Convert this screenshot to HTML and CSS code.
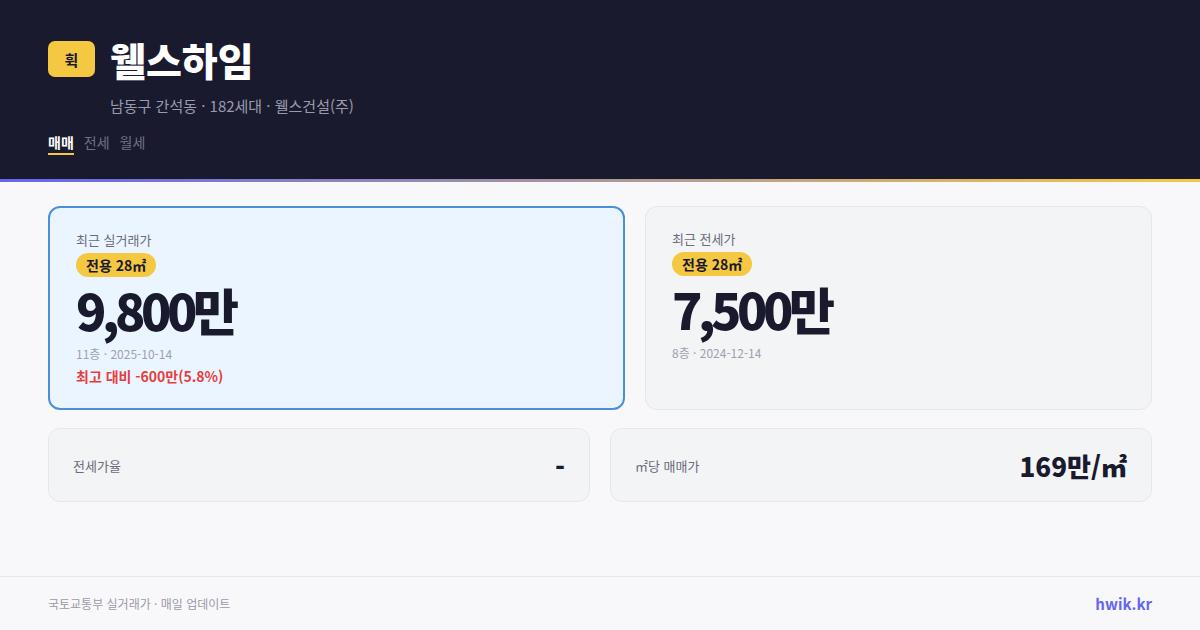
FILE: index.html
```html
<!DOCTYPE html>
<html lang="ko">
<head>
<meta charset="utf-8">
<link rel="stylesheet" href="styles.css">
</head>
<body>
<header class="hero">
  <div class="title-row">
    <div class="logo">휙</div>
    <h1 class="title">웰스하임</h1>
  </div>
  <div class="subtitle">남동구 간석동 · 182세대 · 웰스건설(주)</div>
  <nav class="tabs">
    <span class="tab active">매매</span>
    <span class="tab">전세</span>
    <span class="tab">월세</span>
  </nav>
</header>
<div class="accent"></div>
<main class="content">
  <div class="top-row">
    <section class="card card-main">
      <div class="card-label">최근 실거래가</div>
      <span class="badge">전용 28㎡</span>
      <div class="price">9,800만</div>
      <div class="meta">11층 · 2025-10-14</div>
      <div class="diff">최고 대비 -600만(5.8%)</div>
    </section>
    <section class="card card-side">
      <div class="card-label">최근 전세가</div>
      <span class="badge">전용 28㎡</span>
      <div class="price">7,500만</div>
      <div class="meta">8층 · 2024-12-14</div>
    </section>
  </div>
  <div class="bottom-row">
    <section class="stat">
      <span class="stat-label">전세가율</span>
      <span class="stat-value">-</span>
    </section>
    <section class="stat">
      <span class="stat-label">㎡당 매매가</span>
      <span class="stat-value">169만/㎡</span>
    </section>
  </div>
</main>
<footer class="footer">
  <span class="source">국토교통부 실거래가 · 매일 업데이트</span>
  <span class="brand">hwik.kr</span>
</footer>
</body>
</html>
```
FILE: styles.css
```css
* { box-sizing: border-box; margin: 0; padding: 0; }
html, body { width: 1200px; height: 630px; overflow: hidden; }
body {
  background: #f8f8fa;
  font-family: "Noto Sans CJK KR", "Noto Sans", sans-serif;
  color: #1a1a2e;
}
.hero {
  background: #1a1a2e;
  height: 179px;
  padding: 39px 48px 0;
}
.title-row { display: flex; align-items: center; gap: 15px; }
.logo {
  width: 47px; height: 36px;
  background: #f5c842;
  border-radius: 7px;
  display: flex; align-items: center; justify-content: center;
  font-size: 15px; font-weight: 700; color: #1a1a2e;
}
.title {
  font-size: 39px; font-weight: 900; color: #ffffff;
  line-height: 40px; letter-spacing: 0;
}
.subtitle {
  margin: 17px 0 0 62px;
  font-size: 15px; color: #9a9aae; line-height: 20px;
}
.tabs { display: flex; gap: 10px; margin-top: 16px; }
.tab {
  font-size: 14px; color: #6f7085; line-height: 20px;
  padding-bottom: 1px;
  border-bottom: 2px solid transparent;
}
.tab.active { color: #ffffff; font-weight: 700; border-bottom-color: #f5c842; }
.accent {
  height: 3px;
  background: linear-gradient(90deg, #6366f1, #f5c842);
}
.content { padding: 24px 48px 0; height: 394px; }
.top-row { display: grid; grid-template-columns: 577px 1fr; gap: 20px; }
.card {
  height: 204px;
  border-radius: 12px;
  padding: 23px 26px;
}
.card-main { background: #ebf5ff; border: 2px solid #4a90d9; }
.card-side { background: #f3f4f6; border: 1px solid #e5e7eb; padding: 23px 26px; }
.card-label { font-size: 13px; color: #6b6b7b; line-height: 18px; }
.badge {
  display: inline-block;
  margin-top: 4px;
  background: #f5c842;
  border-radius: 12px;
  padding: 1px 10px;
  font-size: 14px; font-weight: 700; line-height: 22px;
  color: #1a1a2e;
}
.price {
  font-size: 50px; font-weight: 900; line-height: 50px;
  letter-spacing: -4.5px; color: #1a1a2e;
  margin-top: 7px;
}
.meta { font-size: 12px; color: #a0a0ad; line-height: 18px; margin-top: 11px; }
.diff { font-size: 14px; font-weight: 700; color: #e53e3e; line-height: 20px; margin-top: 3px; }
.bottom-row { display: grid; grid-template-columns: 1fr 1fr; gap: 20px; margin-top: 18px; }
.stat {
  height: 74px;
  background: #f3f4f6;
  border: 1px solid #e5e7eb;
  border-radius: 12px;
  padding: 0 24px;
  display: flex; align-items: center; justify-content: space-between;
}
.stat-label { font-size: 13px; color: #6b6b7b; }
.stat-value { font-size: 26px; font-weight: 800; color: #1a1a2e; }
.footer {
  border-top: 1px solid #e5e7eb;
  height: 54px;
  padding: 0 48px;
  display: flex; align-items: center; justify-content: space-between;
}
.source { font-size: 12px; color: #9a9aa8; }
.brand { font-size: 15px; font-weight: 700; color: #6366f1; }
```
